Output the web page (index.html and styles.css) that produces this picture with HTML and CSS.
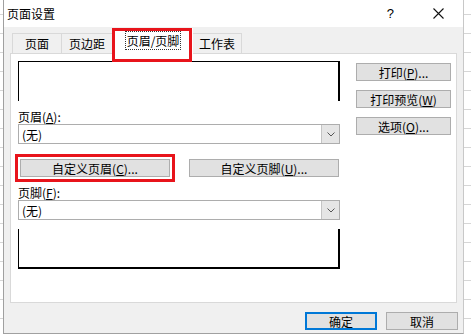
FILE: index.html
```html
<!DOCTYPE html>
<html lang="zh-CN">
<head>
    <meta charset="UTF-8">
    <title>页面设置</title>
    <link rel="stylesheet" href="styles.css">
</head>
<body>
    <div class="dialog">
        <div class="titlebar">
            <span class="title">页面设置</span>
            <span class="help">?</span>
            <span class="close">
                <svg width="11" height="11" viewBox="0 0 11 11"><path d="M0.5 0.5 L10.5 10.5 M10.5 0.5 L0.5 10.5" stroke="#111" stroke-width="1.1" fill="none"/></svg>
            </span>
        </div>

        <div class="tabs">
            <div class="tab tab-1">页面</div>
            <div class="tab tab-2">页边距</div>
            <div class="tab active"><span class="focus">页眉/页脚</span></div>
            <div class="tab tab-4">工作表</div>
        </div>

        <div class="panel">
            <div class="col-left">
                <div class="preview preview-top"></div>

                <div class="label">页眉(<u>A</u>):</div>
                <div class="select">
                    <span>(无)</span>
                    <span class="drop"><svg width="8" height="5" viewBox="0 0 8 5"><path d="M0.5 0.5 L4 4 L7.5 0.5" stroke="#555" fill="none"/></svg></span>
                </div>

                <div class="custom-row">
                    <div class="marked"><button class="btn custom">自定义页眉(<u>C</u>)...</button></div>
                    <button class="btn custom">自定义页脚(<u>U</u>)...</button>
                </div>

                <div class="label">页脚(<u>F</u>):</div>
                <div class="select">
                    <span>(无)</span>
                    <span class="drop"><svg width="8" height="5" viewBox="0 0 8 5"><path d="M0.5 0.5 L4 4 L7.5 0.5" stroke="#555" fill="none"/></svg></span>
                </div>

                <div class="preview preview-bottom"></div>
            </div>

            <div class="col-right">
                <button class="btn side">打印(<u>P</u>)...</button>
                <button class="btn side">打印预览(<u>W</u>)</button>
                <button class="btn side">选项(<u>O</u>)...</button>
            </div>
        </div>

        <div class="actions">
            <button class="btn action ok">确定</button>
            <button class="btn action">取消</button>
        </div>
    </div>
</body>
</html>
```

FILE: styles.css
```css
body {
    margin: 0;
    width: 471px;
    height: 335px;
    overflow: hidden;
    font-family: "Noto Sans CJK SC", "DejaVu Sans", sans-serif;
    font-size: 12px;
    color: #000;
    background-color: #fff;
    background-image: repeating-linear-gradient(to bottom, transparent 0, transparent 14px, #d6d6d6 14px, #d6d6d6 15px, transparent 15px, transparent 19px);
}

.dialog {
    margin-left: 3px;
    width: 461px;
    height: 334px;
    background: #f0f0f0;
    border-left: 1px solid #a0a0a0;
    border-right: 1px solid #c8c8c8;
    border-bottom: 1px solid #a0a0a0;
    box-sizing: border-box;
    display: flex;
    flex-direction: column;
}

.titlebar {
    height: 27px;
    background: #fff;
    display: flex;
    align-items: center;
    flex-shrink: 0;
}

.title {
    margin-left: 3px;
    flex: 1;
}

.help {
    font-family: "Liberation Sans", sans-serif;
    font-size: 13px;
    margin-right: 39px;
}

.close {
    display: flex;
    margin-right: 19px;
}

/* pestañas */
.tabs {
    display: flex;
    align-items: flex-end;
    height: 25px;
    margin-left: 8px;
    margin-top: 1px;
    position: relative;
    z-index: 1;
}

.tab {
    height: 20px;
    line-height: 19px;
    text-align: center;
    box-sizing: border-box;
    border: 1px solid #d9d9d9;
    border-bottom: none;
    background: #f0f0f0;
}

.tab-1 { width: 50px; }
.tab-2 { width: 51px; border-left: none; }
.tab-4 { width: 49px; border-left: none; }

.tab.active {
    width: 80px;
    height: 26px;
    margin-bottom: -1px;
    background: #fff;
    line-height: 24px;
    border-color: #fff;
    position: relative;
}

/* marca roja sobre la pestaña */
.tab.active::after {
    content: "";
    position: absolute;
    left: -2px;
    right: 0;
    top: -1px;
    height: 34px;
    border: 3px solid #e8141b;
    box-sizing: border-box;
}

.focus {
    border: 1px dotted #333;
    padding: 0 1px;
}

.panel {
    height: 250px;
    margin: 0 6px 0 6px;
    background: #fff;
    border: 1px solid #d9d9d9;
    box-sizing: border-box;
    padding: 7px 0 0 7px;
    display: flex;
    gap: 16px;
    flex-shrink: 0;
}

.col-left {
    width: 322px;
    display: flex;
    flex-direction: column;
}

.preview {
    height: 40px;
    box-sizing: border-box;
}

.preview-top {
    border-top: 1px solid #000;
    border-left: 1px solid #000;
    border-right: 2px solid #000;
}

.preview-bottom {
    margin-top: 9px;
    border-left: 1px solid #000;
    border-right: 2px solid #000;
    border-bottom: 2px solid #000;
}

.label {
    height: 15px;
    line-height: 15px;
    margin-top: 8px;
}

.select {
    height: 20px;
    border: 1px solid #adadad;
    box-sizing: border-box;
    display: flex;
    align-items: center;
    justify-content: space-between;
    padding-left: 3px;
}

.drop {
    width: 17px;
    height: 18px;
    background: #e5e5e5;
    border-left: 1px solid #c4c4c4;
    display: flex;
    align-items: center;
    justify-content: center;
}

.btn {
    font-family: "Noto Sans CJK SC", "DejaVu Sans", sans-serif;
    font-size: 12px;
    color: #000;
    background: #e1e1e1;
    border: 1px solid #adadad;
    box-sizing: border-box;
    padding: 0;
    line-height: 15px;
}

.custom-row {
    display: flex;
    gap: 19px;
    margin-top: 15px;
    margin-left: 2px;
}

.btn.custom {
    width: 150px;
    height: 18px;
    display: block;
}

.marked {
    outline: 3px solid #e8141b;
    outline-offset: 2px;
}

.col-right {
    width: 95px;
    display: flex;
    flex-direction: column;
    gap: 9px;
    padding-top: 2px;
}

.btn.side {
    height: 18px;
}

.actions {
    display: flex;
    justify-content: flex-end;
    gap: 9px;
    padding: 9px 5px 0 0;
}

.btn.action {
    width: 72px;
    height: 18px;
}

.btn.ok {
    border: 2px solid #0078d7;
}
```
